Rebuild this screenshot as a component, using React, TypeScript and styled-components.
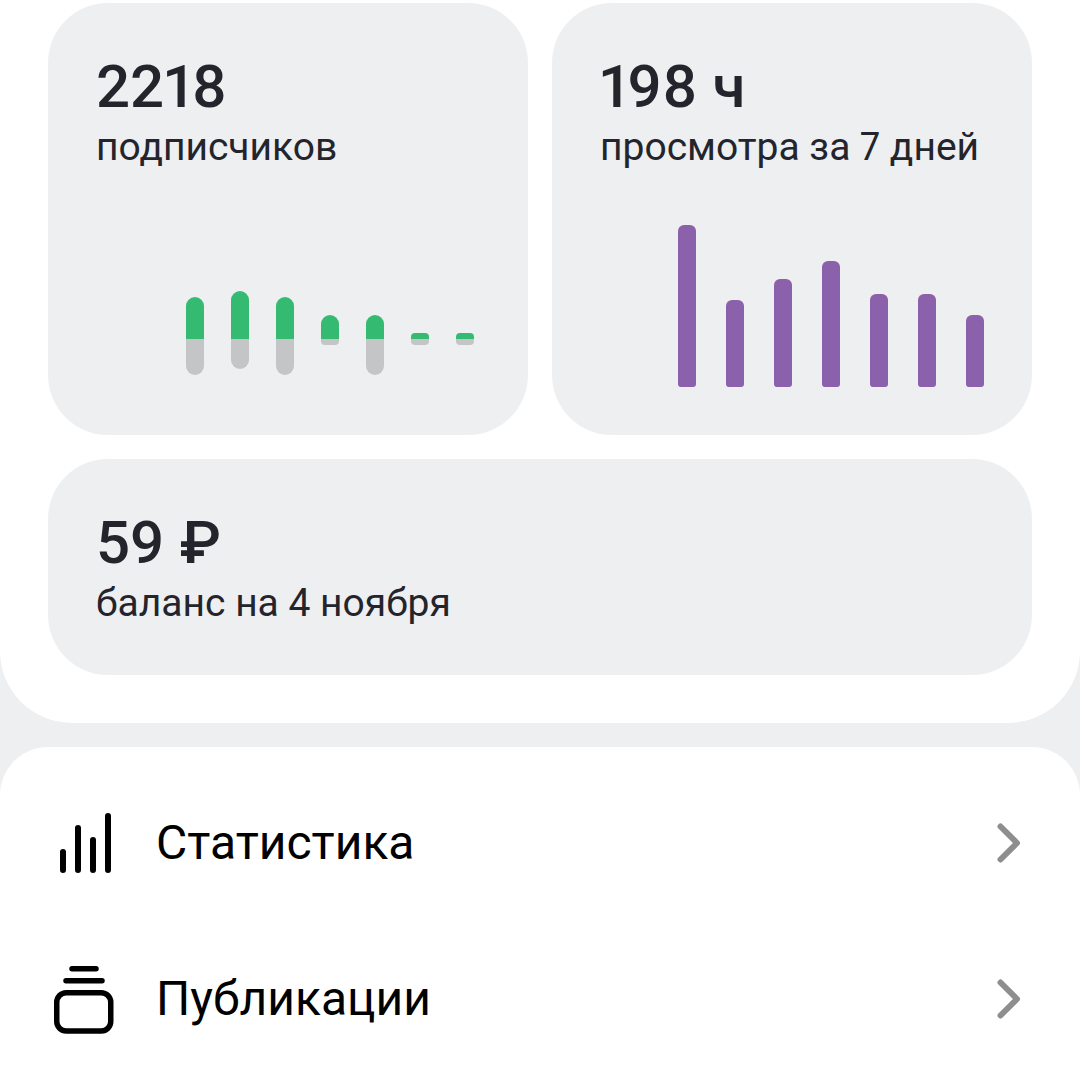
import React from "react";
import styled, { createGlobalStyle } from "styled-components";

const GlobalStyle = createGlobalStyle`
  * {
    box-sizing: border-box;
  }

  body {
    margin: 0;
    background: #eeeff1;
    font-family: Roboto, "Noto Sans", sans-serif;
    font-variant-numeric: proportional-nums;
    color: #24252c;
  }
`;

const Page = styled.main`
  display: flex;
  flex-direction: column;
  gap: 24px;
  min-height: 100vh;
`;

const Summary = styled.section`
  display: grid;
  grid-template-columns: 1fr 1fr;
  gap: 24px;
  padding: 3px 48px 48px;
  background: #ffffff;
  border-radius: 0 0 72px 72px;
`;

const Card = styled.article<{ $wide?: boolean }>`
  display: flex;
  flex-direction: column;
  grid-column: ${({ $wide }) => ($wide ? "1 / -1" : "auto")};
  min-width: 0;
  padding: 48px;
  background: #eeeff1;
  border-radius: 60px;
`;

const Value = styled.h2`
  margin: 0;
  font-size: 60px;
  font-weight: 500;
  line-height: 72px;
`;

const Caption = styled.p`
  margin: 0;
  font-size: 39px;
  line-height: 48px;
  white-space: nowrap;
`;

const Chart = styled.div<{ $gap: number; $inset?: number }>`
  display: flex;
  justify-content: flex-end;
  align-items: flex-end;
  gap: ${({ $gap }) => $gap}px;
  height: 168px;
  margin-top: 48px;
  padding-right: ${({ $inset = 0 }) => $inset}px;
`;

const Bar = styled.div`
  width: 18px;
  background: #8b61ac;
  border-radius: 6px 6px 3px 3px;
`;

const SplitBar = styled.div`
  display: grid;
  grid-template-rows: 120px 48px;
  width: 18px;
`;

const Gained = styled.div<{ $round: boolean }>`
  align-self: end;
  background: #34bb71;
  border-radius: ${({ $round }) => ($round ? "9px 9px 0 0" : "4px 4px 0 0")};
`;

const Lost = styled.div<{ $round: boolean }>`
  align-self: start;
  background: #c4c5c7;
  border-radius: ${({ $round }) => ($round ? "0 0 9px 9px" : "0 0 4px 4px")};
`;

const Menu = styled.nav`
  flex: 1;
  padding-top: 18px;
  background: #ffffff;
  border-radius: 48px 48px 0 0;
`;

const MenuLink = styled.a`
  display: flex;
  align-items: center;
  gap: 36px;
  height: 156px;
  padding: 0 48px;
  color: #000000;
  text-decoration: none;
`;

const MenuLabel = styled.span`
  flex: 1;
  font-size: 48px;
  line-height: 60px;
`;

const MenuIcon = styled.svg`
  flex: none;
  width: 72px;
  height: 72px;
  fill: none;
  stroke: #000000;
  stroke-linecap: round;
`;

const Chevron = styled.svg`
  flex: none;
  width: 48px;
  height: 48px;
  fill: none;
  stroke: #8e8e8e;
  stroke-width: 6;
  stroke-linecap: round;
  stroke-linejoin: round;
`;

const subscribers = [
  { gained: 42, lost: 36 },
  { gained: 48, lost: 30 },
  { gained: 42, lost: 36 },
  { gained: 24, lost: 6 },
  { gained: 24, lost: 36 },
  { gained: 6, lost: 6 },
  { gained: 6, lost: 6 },
];

const views = [162, 87, 108, 126, 93, 93, 72];

function ChevronRight() {
  return (
    <Chevron viewBox="0 0 48 48" aria-hidden="true">
      <path d="M16.5 7.5 33 24 16.5 40.5" />
    </Chevron>
  );
}

export default function App() {
  return (
    <>
      <GlobalStyle />
      <Page>
        <Summary>
          <Card>
            <Value>2218</Value>
            <Caption>подписчиков</Caption>
            <Chart $gap={27} $inset={6}>
              {subscribers.map(({ gained, lost }, day) => (
                <SplitBar key={day}>
                  <Gained $round={gained > 9} style={{ height: gained }} />
                  <Lost $round={lost > 9} style={{ height: lost }} />
                </SplitBar>
              ))}
            </Chart>
          </Card>
          <Card>
            <Value>198 ч</Value>
            <Caption>просмотра за 7 дней</Caption>
            <Chart $gap={30}>
              {views.map((height, day) => (
                <Bar key={day} style={{ height }} />
              ))}
            </Chart>
          </Card>
          <Card $wide>
            <Value>59 ₽</Value>
            <Caption>баланс на 4 ноября</Caption>
          </Card>
        </Summary>
        <Menu>
          <MenuLink href="#statistics">
            <MenuIcon viewBox="0 0 72 72" strokeWidth="6" aria-hidden="true">
              <path d="M15 45v18M30 21v42M45 33v30M60 9v54" />
            </MenuIcon>
            <MenuLabel>Статистика</MenuLabel>
            <ChevronRight />
          </MenuLink>
          <MenuLink href="#publications">
            <MenuIcon viewBox="0 0 72 72" strokeWidth="5.5" aria-hidden="true">
              <path d="M24 5.7h24M18 17.7h36" />
              <rect x="8.75" y="29.75" width="54" height="38.25" rx="9.5" />
            </MenuIcon>
            <MenuLabel>Публикации</MenuLabel>
            <ChevronRight />
          </MenuLink>
        </Menu>
      </Page>
    </>
  );
}
